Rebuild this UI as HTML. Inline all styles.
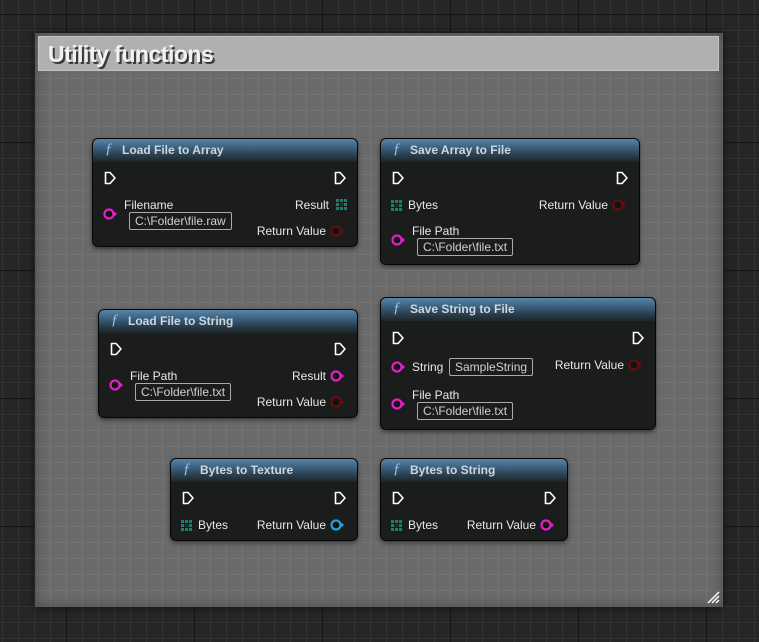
<!DOCTYPE html>
<html><head><meta charset="utf-8"><style>
*{margin:0;padding:0;box-sizing:border-box}
body{width:759px;height:642px;overflow:hidden;position:relative;font-family:"Liberation Sans","DejaVu Sans",sans-serif;
background-color:#262626;
background-image:
linear-gradient(90deg,#141414 1px,transparent 1px),
linear-gradient(0deg,#141414 1px,transparent 1px),
linear-gradient(90deg,#323232 1px,transparent 1px),
linear-gradient(0deg,#323232 1px,transparent 1px);
background-size:128px 128px,128px 128px,16px 16px,16px 16px;
background-position:66px 15px,66px 15px,2px 15px,2px 15px;}
.frame{position:absolute;left:35px;top:33px;width:688px;height:574px;background-color:#6a6a6a;
background-image:linear-gradient(90deg,#737373 1px,transparent 1px),linear-gradient(0deg,#737373 1px,transparent 1px);
background-size:16px 16px;background-position:-33px -18px;box-shadow:0 0 8px rgba(0,0,0,.6), inset 0 0 12px rgba(0,0,0,.35)}
.title{position:absolute;left:3px;top:3px;right:4px;height:35px;background:#b0b0b0;border:1px solid #c4c4c4}
.title span{position:absolute;left:9px;top:4px;font-size:23px;font-weight:bold;color:#f2f2f2;letter-spacing:-0.5px;text-shadow:2px 2px 0 #3a3a3a}
.node{position:absolute;background:rgba(24,26,26,.96);border:1px solid #050505;border-radius:6px;box-shadow:0 2px 5px rgba(0,0,0,.5);color:#e8e8e8;font-size:12px}
.hd{position:absolute;left:0;right:0;top:0;height:23px;border-radius:5px 5px 0 0;background:linear-gradient(180deg,#5584a8 0%,#3d6382 35%,#2a3e4d 70%,#1d2528 100%)}
.hd b{position:absolute;left:29px;top:4px;font-size:12px;color:#cfd6dc}
.hd i{position:absolute;left:12px;top:2px;font-size:15px;color:#8ec8f0;font-family:"Liberation Serif",serif}
.a{position:absolute;white-space:nowrap;line-height:14px}
.box{position:absolute;border:1px solid #aaa;border-radius:2px;height:18px;line-height:16px;padding:0 5px;color:#d0d0d0;font-size:12px;white-space:nowrap}
svg{position:absolute;overflow:visible}
</style></head><body>
<svg width="0" height="0"><defs>
<g id="ex"><path d="M1.5 1.5 H6 L11 7 L6 12.5 H1.5 Z" fill="none" stroke="#fff" stroke-width="1.6" stroke-linejoin="round"/></g>
<g id="pm"><circle cx="5" cy="5" r="4.5" fill="#111" stroke="#e21ec8" stroke-width="2.2"/><path d="M10.5 2.5 L13 5 L10.5 7.5Z" fill="#e21ec8"/></g>
<g id="pr"><circle cx="5" cy="5" r="4.5" fill="#111" stroke="#6a0a0a" stroke-width="2.2"/><path d="M10.5 2.5 L13 5 L10.5 7.5Z" fill="#6a0a0a"/></g>
<g id="pb"><circle cx="5" cy="5" r="4.5" fill="#111" stroke="#1ea0e0" stroke-width="2.2"/><path d="M10.5 2.5 L13 5 L10.5 7.5Z" fill="#1ea0e0"/></g>
<g id="ar" fill="#1f7d70"><rect x="0" y="0" width="3" height="3"/><rect x="4" y="0" width="3" height="3"/><rect x="8" y="0" width="3" height="3"/><rect x="0" y="4" width="3" height="3"/><rect x="8" y="4" width="3" height="3"/><rect x="0" y="8" width="3" height="3"/><rect x="4" y="8" width="3" height="3"/><rect x="8" y="8" width="3" height="3"/><rect x="4" y="4" width="3" height="3" fill="#0f3a34"/></g>
</defs></svg>

<div class="frame"><div class="title"><span>Utility functions</span></div>
<svg width="14" height="14" style="left:671px;top:557px"><path d="M13 2 L2 13 M13 6 L6 13 M13 10 L10 13" stroke="#fff" stroke-width="1.5"/></svg>
</div>

<div class="node" style="left:92px;top:138px;width:266px;height:109px">
<div class="hd"><i>ƒ</i><b>Load File to Array</b></div>
<svg style="left:11px;top:32px" width="14" height="14"><use href="#ex"/></svg>
<svg style="left:241px;top:32px" width="14" height="14"><use href="#ex"/></svg>
<svg style="left:11px;top:70px" width="14" height="10"><use href="#pm"/></svg>
<div class="a" style="left:31px;top:59px">Filename</div>
<div class="box" style="left:36px;top:73px">C:\Folder\file.raw</div>
<div class="a" style="right:28px;top:59px">Result</div>
<svg style="left:243px;top:60px" width="11" height="11"><use href="#ar"/></svg>
<div class="a" style="right:31px;top:85px">Return Value</div>
<svg style="left:238px;top:87px" width="14" height="10"><use href="#pr"/></svg>
</div>

<div class="node" style="left:380px;top:138px;width:260px;height:127px">
<div class="hd"><i>ƒ</i><b>Save Array to File</b></div>
<svg style="left:11px;top:32px" width="14" height="14"><use href="#ex"/></svg>
<svg style="left:235px;top:32px" width="14" height="14"><use href="#ex"/></svg>
<svg style="left:10px;top:61px" width="11" height="11"><use href="#ar"/></svg>
<div class="a" style="left:27px;top:59px">Bytes</div>
<div class="a" style="right:31px;top:59px">Return Value</div>
<svg style="left:232px;top:61px" width="14" height="10"><use href="#pr"/></svg>
<svg style="left:11px;top:96px" width="14" height="10"><use href="#pm"/></svg>
<div class="a" style="left:31px;top:85px">File Path</div>
<div class="box" style="left:36px;top:99px">C:\Folder\file.txt</div>
</div>

<div class="node" style="left:98px;top:309px;width:260px;height:109px">
<div class="hd"><i>ƒ</i><b>Load File to String</b></div>
<svg style="left:11px;top:32px" width="14" height="14"><use href="#ex"/></svg>
<svg style="left:235px;top:32px" width="14" height="14"><use href="#ex"/></svg>
<svg style="left:11px;top:70px" width="14" height="10"><use href="#pm"/></svg>
<div class="a" style="left:31px;top:59px">File Path</div>
<div class="box" style="left:36px;top:73px">C:\Folder\file.txt</div>
<div class="a" style="right:31px;top:59px">Result</div>
<svg style="left:232px;top:61px" width="14" height="10"><use href="#pm"/></svg>
<div class="a" style="right:31px;top:85px">Return Value</div>
<svg style="left:232px;top:87px" width="14" height="10"><use href="#pr"/></svg>
</div>

<div class="node" style="left:380px;top:297px;width:276px;height:133px">
<div class="hd"><i>ƒ</i><b>Save String to File</b></div>
<svg style="left:11px;top:33px" width="14" height="14"><use href="#ex"/></svg>
<svg style="left:251px;top:33px" width="14" height="14"><use href="#ex"/></svg>
<svg style="left:11px;top:64px" width="14" height="10"><use href="#pm"/></svg>
<div class="a" style="left:31px;top:62px">String</div>
<div class="box" style="left:68px;top:60px">SampleString</div>
<div class="a" style="right:31px;top:60px">Return Value</div>
<svg style="left:248px;top:62px" width="14" height="10"><use href="#pr"/></svg>
<svg style="left:11px;top:101px" width="14" height="10"><use href="#pm"/></svg>
<div class="a" style="left:31px;top:90px">File Path</div>
<div class="box" style="left:36px;top:104px">C:\Folder\file.txt</div>
</div>

<div class="node" style="left:170px;top:458px;width:188px;height:83px">
<div class="hd"><i>ƒ</i><b>Bytes to Texture</b></div>
<svg style="left:11px;top:32px" width="14" height="14"><use href="#ex"/></svg>
<svg style="left:163px;top:32px" width="14" height="14"><use href="#ex"/></svg>
<svg style="left:10px;top:61px" width="11" height="11"><use href="#ar"/></svg>
<div class="a" style="left:27px;top:59px">Bytes</div>
<div class="a" style="right:31px;top:59px">Return Value</div>
<svg style="left:160px;top:61px" width="14" height="10"><use href="#pb"/></svg>
</div>

<div class="node" style="left:380px;top:458px;width:188px;height:83px">
<div class="hd"><i>ƒ</i><b>Bytes to String</b></div>
<svg style="left:11px;top:32px" width="14" height="14"><use href="#ex"/></svg>
<svg style="left:163px;top:32px" width="14" height="14"><use href="#ex"/></svg>
<svg style="left:10px;top:61px" width="11" height="11"><use href="#ar"/></svg>
<div class="a" style="left:27px;top:59px">Bytes</div>
<div class="a" style="right:31px;top:59px">Return Value</div>
<svg style="left:160px;top:61px" width="14" height="10"><use href="#pm"/></svg>
</div>
</body></html>
